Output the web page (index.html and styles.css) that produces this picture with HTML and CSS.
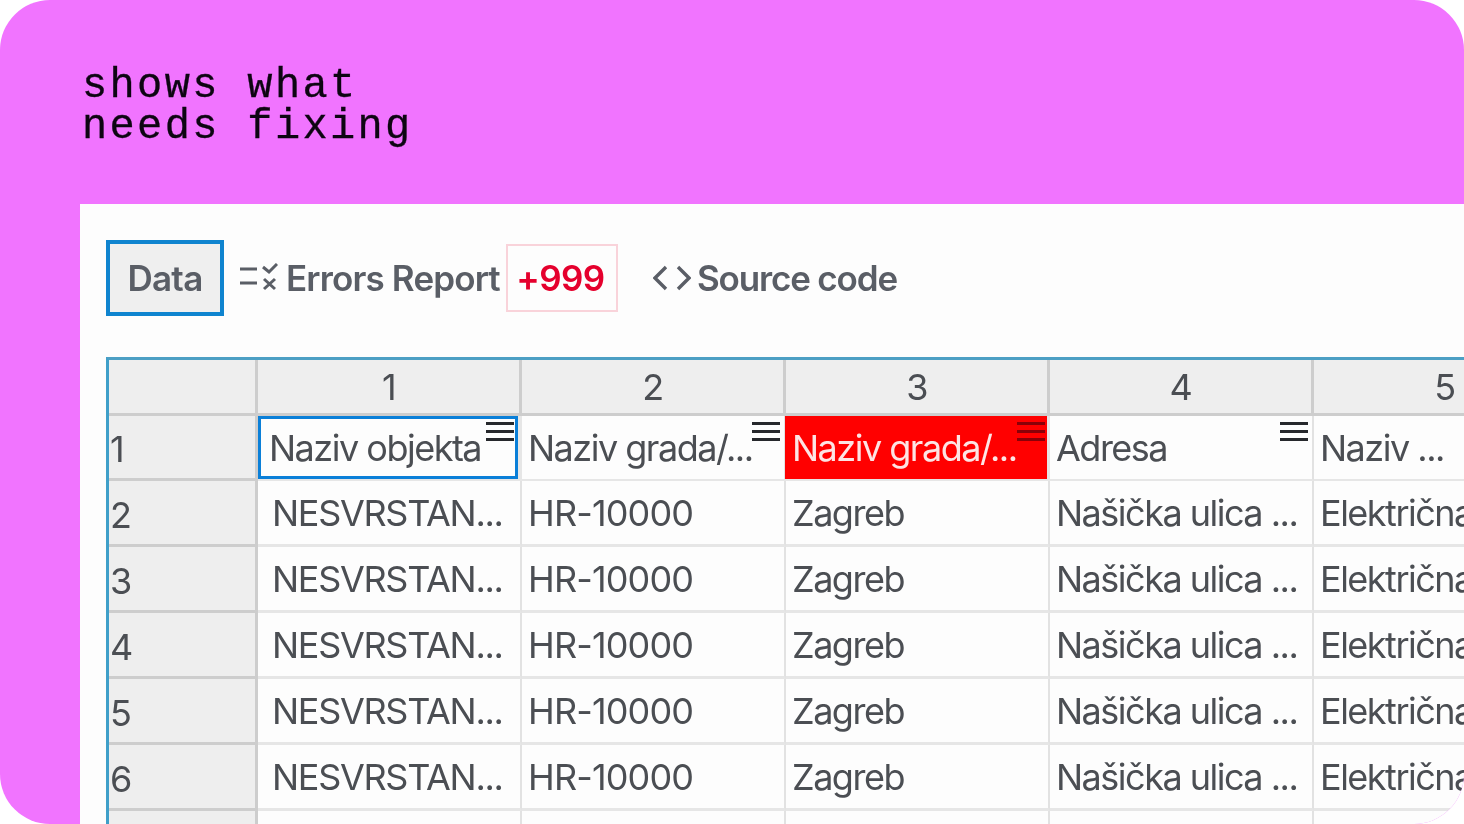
FILE: index.html
```html
<!DOCTYPE html>
<html lang="hr">
<head>
<meta charset="utf-8">
<title>shows what needs fixing</title>
<link rel="stylesheet" href="styles.css">
</head>
<body>
<main class="card">
  <h1 class="headline">shows what<br>needs fixing</h1>
  <section class="panel">
    <nav class="tabs">
      <button class="tab tab-active">Data</button>
      <span class="tab-link tab-errors">
        <svg class="icon-errors" viewBox="0 0 38 30" width="38" height="30" aria-hidden="true"><path d="M0 6h17M0 20h17M23 4l6 5 8-8M24 16l11 10M35 16L24 26" fill="none" stroke="#5a5e66" stroke-width="3"/></svg>
        Errors Report
      </span>
      <span class="badge">+999</span>
      <span class="tab-link tab-source">
        <svg class="icon-code" viewBox="0 0 38 28" width="38" height="28" aria-hidden="true"><path d="M13 3L2 14l11 11M25 3l11 11-11 11" fill="none" stroke="#5a5e66" stroke-width="3.4"/></svg>
        Source code
      </span>
    </nav>
    <div class="sheet">
      <div class="cell head"></div><div class="cell head">1</div><div class="cell head">2</div><div class="cell head">3</div><div class="cell head">4</div><div class="cell head">5</div>

      <div class="cell rowhead">1</div>
      <div class="cell selected">Naziv objekta<svg class="menu" viewBox="0 0 30 21" aria-hidden="true"><path d="M1 2.5h28M1 10.5h28M1 18.5h28"/></svg></div>
      <div class="cell title">Naziv grada/...<svg class="menu" viewBox="0 0 30 21" aria-hidden="true"><path d="M1 2.5h28M1 10.5h28M1 18.5h28"/></svg></div>
      <div class="cell title error">Naziv grada/...<svg class="menu" viewBox="0 0 30 21" aria-hidden="true"><path d="M1 2.5h28M1 10.5h28M1 18.5h28"/></svg></div>
      <div class="cell title">Adresa<svg class="menu" viewBox="0 0 30 21" aria-hidden="true"><path d="M1 2.5h28M1 10.5h28M1 18.5h28"/></svg></div>
      <div class="cell title">Naziv ...</div>

      <div class="cell rowhead">2</div><div class="cell first">NESVRSTAN...</div><div class="cell code">HR-10000</div><div class="cell">Zagreb</div><div class="cell">Našička ulica ...</div><div class="cell">Električna</div>
      <div class="cell rowhead">3</div><div class="cell first">NESVRSTAN...</div><div class="cell code">HR-10000</div><div class="cell">Zagreb</div><div class="cell">Našička ulica ...</div><div class="cell">Električna</div>
      <div class="cell rowhead">4</div><div class="cell first">NESVRSTAN...</div><div class="cell code">HR-10000</div><div class="cell">Zagreb</div><div class="cell">Našička ulica ...</div><div class="cell">Električna</div>
      <div class="cell rowhead">5</div><div class="cell first">NESVRSTAN...</div><div class="cell code">HR-10000</div><div class="cell">Zagreb</div><div class="cell">Našička ulica ...</div><div class="cell">Električna</div>
      <div class="cell rowhead">6</div><div class="cell first">NESVRSTAN...</div><div class="cell code">HR-10000</div><div class="cell">Zagreb</div><div class="cell">Našička ulica ...</div><div class="cell">Električna</div>
      <div class="cell rowhead"></div><div class="cell"></div><div class="cell"></div><div class="cell"></div><div class="cell"></div><div class="cell"></div>
    </div>
  </section>
</main>
</body>
</html>
```

FILE: styles.css
```css
* { box-sizing: border-box; }
html, body { margin: 0; height: 824px; overflow: hidden; background: #fff; }

.card {
  width: 1464px;
  height: 824px;
  display: flex;
  flex-direction: column;
  background: #f174ff;
  border-radius: 50px;
  overflow: hidden;
}

.headline {
  height: 204px;
  margin: 0;
  padding: 66px 0 0 82px;
  font: 400 42px/41px "Liberation Mono", monospace;
  letter-spacing: 2.35px;
  color: #0d0512;
  -webkit-text-stroke: 0.3px #0d0512;
  filter: blur(0.3px);
}

.panel {
  flex: 1;
  margin-left: 80px;
  padding: 36px 0 0 26px;
  background: #fdfdfd;
  overflow: hidden;
  font-family: Inter, sans-serif;
  color: #55585e;
  filter: blur(0.55px);
}

.tabs { display: flex; align-items: center; height: 76px; }

.tab {
  width: 118px;
  height: 76px;
  padding: 0;
  border: 4px solid #0f84cf;
  background: #efefef;
  font: 600 35px Inter, sans-serif;
  letter-spacing: -0.7px;
  color: #5a5e66;
}

.tab-link {
  display: flex;
  align-items: center;
  font-size: 35px;
  font-weight: 600;
  color: #5a5e66;
}

.tab-errors { margin-left: 16px; gap: 8px; letter-spacing: -0.85px; }
.tab-source { margin-left: 35px; gap: 6px; letter-spacing: -1.15px; }

.badge {
  display: flex;
  align-items: center;
  justify-content: center;
  width: 112px;
  height: 68px;
  margin-left: 6px;
  padding-right: 3px;
  border: 2px solid #f9d3da;
  font-size: 35px;
  font-weight: 600;
  letter-spacing: -0.6px;
  color: #e5002d;
}

.sheet {
  display: grid;
  grid-template-columns: 149px repeat(5, 264px);
  grid-template-rows: 56px 65px repeat(6, 66px);
  width: 1400px;
  margin-top: 41px;
  border-top: 3px solid #4c9fc4;
  border-left: 3px solid #3f9fc9;
  background: #e6e6e6;
  font-size: 36px;
  letter-spacing: -1.5px;
  color: #4b4e53;
}

.cell {
  position: relative;
  display: flex;
  align-items: center;
  padding: 0 0 0 6px;
  white-space: nowrap;
  overflow: hidden;
  background: #fdfdfd padding-box;
  border-right: 2px solid #e2e2e2;
  border-bottom: 3px solid #e6e6e6;
}

.first { padding-left: 14px; letter-spacing: -1.3px; }
.code { letter-spacing: -0.85px; }
.title { padding-top: 1px; border-bottom-width: 2px; }

.head {
  justify-content: center;
  padding: 0;
  background: #eeeeee padding-box;
  border-right: 3px solid #cdcdcd;
  border-bottom: 3px solid #cdcdcd;
}

.rowhead {
  padding: 4px 0 0 1px;
  background: #eeeeee padding-box;
  border-right: 3px solid #cdcdcd;
  border-bottom: 3px solid #cdcdcd;
}

.selected {
  margin: 0 4px 2px 0;
  padding: 0 0 0 8px;
  border: 3px solid #0a7fd8;
}

.error {
  margin: 0 3px 0 -1px;
  padding-left: 7px;
  border-right: 0;
  background: #ff0000 padding-box;
  color: #fde4e4;
}

.menu {
  position: absolute;
  top: 5px;
  right: 3px;
  width: 30px;
  height: 21px;
  fill: none;
  stroke: #26282c;
  stroke-width: 3;
}

.selected .menu { top: 2px; right: 0; }
.error .menu { right: 1px; stroke: #8a0008; }
```
